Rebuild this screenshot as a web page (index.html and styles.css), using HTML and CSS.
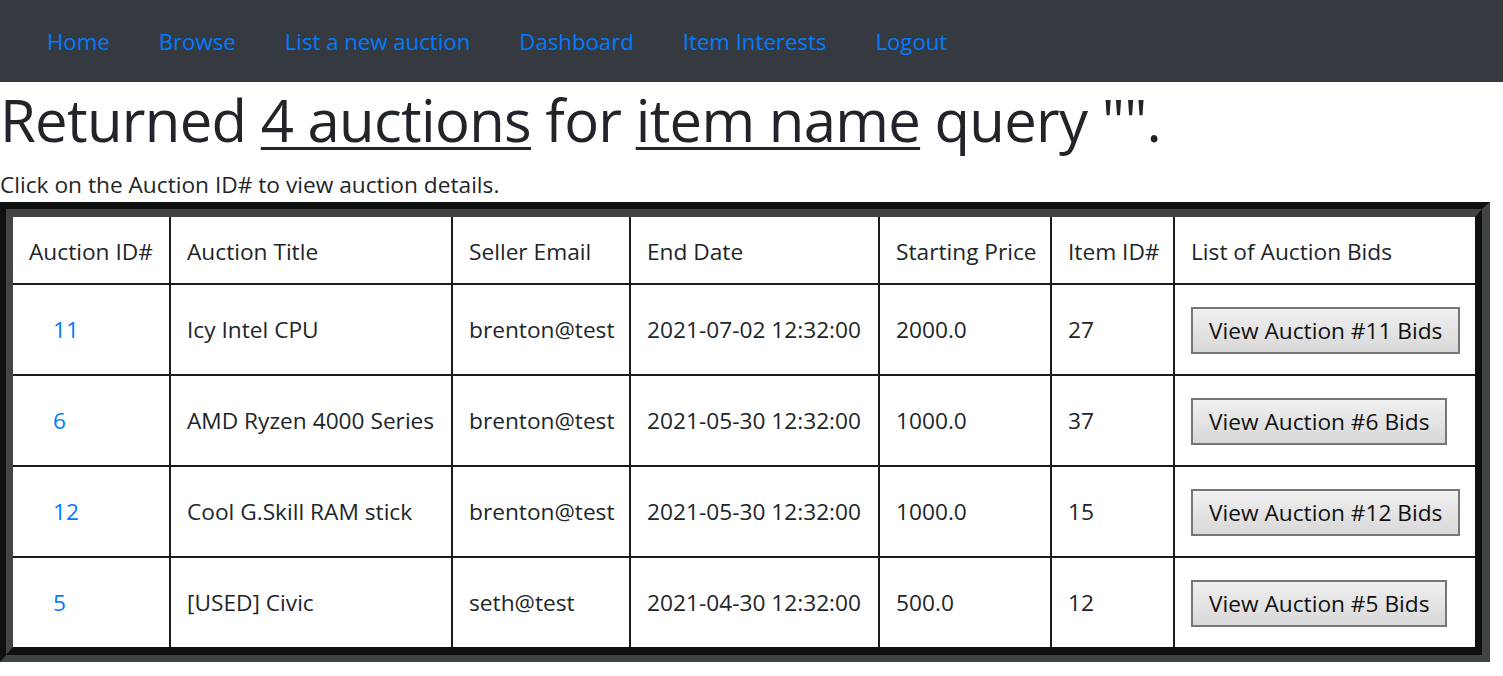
FILE: index.html
```html
<!DOCTYPE html>
<html lang="en">
<head>
<meta charset="utf-8">
<title>Browse auctions</title>
<link rel="stylesheet" href="styles.css">
</head>
<body>
<nav class="navbar">
  <a class="nav-link" href="#">Home</a>
  <a class="nav-link" href="#">Browse</a>
  <a class="nav-link" href="#">List a new auction</a>
  <a class="nav-link" href="#">Dashboard</a>
  <a class="nav-link" href="#">Item Interests</a>
  <a class="nav-link" href="#">Logout</a>
</nav>
<h1 class="title">Returned <u>4 auctions</u> for <u>item name</u> query "".</h1>
<p class="hint">Click on the Auction ID# to view auction details.</p>
<div class="table-frame">
<table class="auctions">
  <colgroup>
    <col class="c1"><col class="c2"><col class="c3"><col class="c4"><col class="c5"><col class="c6"><col class="c7">
  </colgroup>
  <thead>
    <tr>
      <th>Auction ID#</th>
      <th>Auction Title</th>
      <th>Seller Email</th>
      <th>End Date</th>
      <th>Starting Price</th>
      <th>Item ID#</th>
      <th>List of Auction Bids</th>
    </tr>
  </thead>
  <tbody>
    <tr>
      <td><a class="id-link" href="#">11</a></td>
      <td>Icy Intel CPU</td>
      <td>brenton@test</td>
      <td>2021-07-02 12:32:00</td>
      <td>2000.0</td>
      <td>27</td>
      <td><button class="bids-btn" type="button">View Auction #11 Bids</button></td>
    </tr>
    <tr>
      <td><a class="id-link" href="#">6</a></td>
      <td>AMD Ryzen 4000 Series</td>
      <td>brenton@test</td>
      <td>2021-05-30 12:32:00</td>
      <td>1000.0</td>
      <td>37</td>
      <td><button class="bids-btn" type="button">View Auction #6 Bids</button></td>
    </tr>
    <tr>
      <td><a class="id-link" href="#">12</a></td>
      <td>Cool G.Skill RAM stick</td>
      <td>brenton@test</td>
      <td>2021-05-30 12:32:00</td>
      <td>1000.0</td>
      <td>15</td>
      <td><button class="bids-btn" type="button">View Auction #12 Bids</button></td>
    </tr>
    <tr>
      <td><a class="id-link" href="#">5</a></td>
      <td>[USED] Civic</td>
      <td>seth@test</td>
      <td>2021-04-30 12:32:00</td>
      <td>500.0</td>
      <td>12</td>
      <td><button class="bids-btn" type="button">View Auction #5 Bids</button></td>
    </tr>
  </tbody>
</table>
</div>
</body>
</html>
```
FILE: styles.css
```css
* { box-sizing: border-box; }

body {
  margin: 0;
  font-family: "Open Sans", "Noto Sans", sans-serif;
  font-size: 22.7px;
  color: #212529;
  background: #fff;
}

.navbar {
  display: flex;
  align-items: center;
  gap: 49px;
  height: 82px;
  padding: 2px 0 0 47px;
  background: #343a40;
}

.nav-link {
  color: #007bff;
  text-decoration: none;
  font-size: 22.2px;
  line-height: 30px;
}

.title {
  margin: 0 0 10px;
  font-size: 58px;
  letter-spacing: -0.7px;
  font-weight: 400;
  line-height: 76px;
  color: #212529;
}

.title u {
  text-decoration-thickness: 3px;
  text-underline-offset: 5px;
}

.hint {
  margin: 0;
  line-height: 34px;
}

.table-frame {
  width: 1490px;
  border-style: solid;
  border-width: 7px 8px 7px 6px;
  border-color: #0f1111 #404444 #404444 #0f1111;
}

.auctions {
  width: 100%;
  table-layout: fixed;
  border-collapse: separate;
  border-spacing: 0;
  border-style: solid;
  border-width: 8px 7px 8px 7px;
  border-color: #404444 #0f1111 #0f1111 #404444;
}

.c1 { width: 158px; }
.c2 { width: 282px; }
.c3 { width: 178px; }
.c4 { width: 249px; }
.c5 { width: 172px; }
.c6 { width: 123px; }
.c7 { width: 300px; }

.auctions th,
.auctions td {
  padding: 1px 16px 0;
  text-align: left;
  font-weight: 400;
  white-space: nowrap;
  vertical-align: middle;
  border-right: 2px solid #1c1c1c;
  border-bottom: 2px solid #1c1c1c;
}

.auctions th:last-child,
.auctions td:last-child { border-right: 0; }

.auctions tbody tr:last-child td { border-bottom: 0; }

.auctions th {
  height: 68px;
  padding-top: 3px;
  line-height: 30px;
}

.auctions td {
  height: 91px;
  line-height: 30px;
}

.auctions tbody tr:last-child td { height: 89px; }

.id-link {
  margin-left: 24px;
  color: #007bff;
  text-decoration: none;
}

.bids-btn {
  height: 47px;
  padding: 0 16px;
  font-family: inherit;
  font-size: 22.7px;
  color: #111;
  background: linear-gradient(#f0f0f0, #d8d8d8);
  border: 2px solid #767676;
  border-radius: 0;
}
```
